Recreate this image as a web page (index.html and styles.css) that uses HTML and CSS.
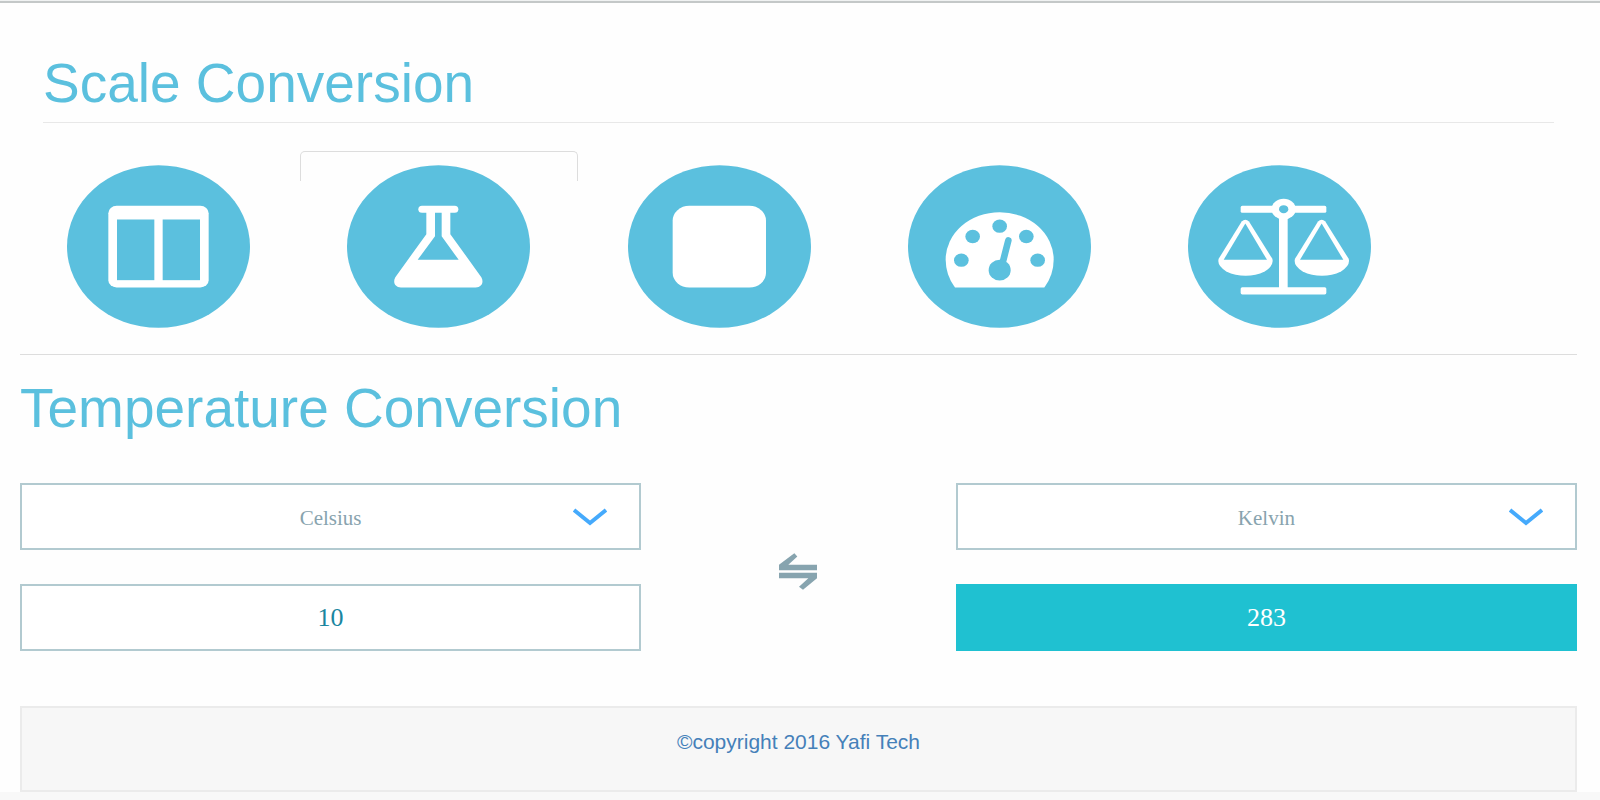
FILE: index.html
```html
<!DOCTYPE html>
<html lang="en">
<head>
<meta charset="utf-8">
<meta name="viewport" content="width=device-width, initial-scale=1">
<title>Scale Conversion</title>
<link rel="stylesheet" href="styles.css">
</head>
<body>
<div class="page">
  <header class="page-header">
    <h1 class="heading">Scale Conversion</h1>
  </header>

  <nav class="tabs" aria-label="Scales">
    <a class="tab" href="#length" aria-label="Length">
      <svg class="tab-icon" viewBox="0 0 549 488" aria-hidden="true">
        <ellipse class="disc" cx="274.5" cy="244" rx="274.5" ry="244"/>
        <rect class="glyph" x="124" y="122" width="301" height="245" rx="25" ry="22"/>
        <rect class="disc" x="150" y="163" width="112" height="182"/>
        <rect class="disc" x="287" y="163" width="112" height="182"/>
      </svg>
    </a>
    <a class="tab tab-active" href="#temperature" aria-label="Temperature" aria-current="page">
      <svg class="tab-icon" viewBox="0 0 549 488" aria-hidden="true">
        <ellipse class="disc" cx="274.5" cy="244" rx="274.5" ry="244"/>
        <rect class="glyph" x="214" y="122" width="120" height="21" rx="11"/>
        <path class="glyph" d="M238 132V207L145 336C137 350 143 367 162 367H386C405 367 411 350 403 336L310 207V132Z"/>
        <path class="disc" d="M264 143H284V213L335 284H212L264 213Z"/>
      </svg>
    </a>
    <a class="tab" href="#area" aria-label="Area">
      <svg class="tab-icon" viewBox="0 0 549 488" aria-hidden="true">
        <ellipse class="disc" cx="274.5" cy="244" rx="274.5" ry="244"/>
        <rect class="glyph" x="134" y="122" width="280" height="245" rx="50" ry="44"/>
      </svg>
    </a>
    <a class="tab" href="#speed" aria-label="Speed">
      <svg class="tab-icon" viewBox="0 0 549 488" aria-hidden="true">
        <ellipse class="disc" cx="274.5" cy="244" rx="274.5" ry="244"/>
        <path class="glyph" d="M141 367Q113 330 113 283A162 142 0 0 1 437 283Q437 330 409 367Z"/>
        <ellipse class="disc" cx="160" cy="285" rx="22" ry="20"/>
        <ellipse class="disc" cx="194" cy="214" rx="22" ry="20"/>
        <ellipse class="disc" cx="275" cy="183" rx="22" ry="20"/>
        <ellipse class="disc" cx="355" cy="214" rx="22" ry="20"/>
        <ellipse class="disc" cx="389" cy="285" rx="22" ry="20"/>
        <ellipse class="disc" cx="275" cy="315" rx="33" ry="31"/>
        <path class="needle" d="M280 308L301 226"/>
      </svg>
    </a>
    <a class="tab" href="#weight" aria-label="Weight">
      <svg class="tab-icon" viewBox="0 0 549 488" aria-hidden="true">
        <ellipse class="disc" cx="274.5" cy="244" rx="274.5" ry="244"/>
        <rect class="glyph" x="158" y="122" width="257" height="21" rx="5"/>
        <rect class="glyph" x="273" y="140" width="26" height="236"/>
        <rect class="glyph" x="158" y="366" width="257" height="22" rx="5"/>
        <ellipse class="glyph" cx="287" cy="132" rx="36" ry="31"/>
        <ellipse class="disc" cx="287" cy="132" rx="14" ry="12"/>
        <path class="glyph" d="M161 169Q172 158 183 169L253 281Q259 301 230 319Q203 332 173 332Q142 332 115 319Q86 301 92 281Z"/>
        <path class="disc" d="M172 175L107 284H237Z"/>
        <path class="glyph" d="M390 169Q401 158 412 169L482 281Q488 301 459 319Q432 332 402 332Q371 332 344 319Q315 301 321 281Z"/>
        <path class="disc" d="M401 175L336 284H466Z"/>
      </svg>
    </a>
  </nav>

  <main>
    <h2 class="heading heading-section">Temperature Conversion</h2>
    <form class="converter">
      <div class="side">
        <div class="select-wrap">
          <select class="field unit" aria-label="From unit">
            <option selected>Celsius</option>
            <option>Fahrenheit</option>
            <option>Kelvin</option>
          </select>
          <svg class="chevron" viewBox="0 0 34 18" aria-hidden="true"><path d="M1 2L17 15L33 2"/></svg>
        </div>
        <input class="field value" type="text" value="10" aria-label="Value">
      </div>
      <button class="swap" type="button" aria-label="Swap units">
        <svg class="swap-icon" viewBox="0 0 114 110" aria-hidden="true">
          <path d="M0 35L46 0L55 10L28 35H114V51H0Z"/>
          <path d="M0 59H114V75L72 110L60 101L88 75H0Z"/>
        </svg>
      </button>
      <div class="side">
        <div class="select-wrap">
          <select class="field unit" aria-label="To unit">
            <option>Celsius</option>
            <option>Fahrenheit</option>
            <option selected>Kelvin</option>
          </select>
          <svg class="chevron" viewBox="0 0 34 18" aria-hidden="true"><path d="M1 2L17 15L33 2"/></svg>
        </div>
        <input class="field value result" type="text" value="283" readonly aria-label="Result">
      </div>
    </form>
  </main>

  <footer class="footer"><a class="footer-link" href="#top">©copyright 2016 Yafi Tech</a></footer>
</div>
</body>
</html>
```
FILE: styles.css
```css
* {
  box-sizing: border-box;
}

body {
  margin: 0;
  background: #f8f8f8;
  font-family: "Liberation Sans", Arial, sans-serif;
  border-top: 1px solid #f0f2f2;
}

.page {
  padding: 50px 23px 0 20px;
  background: #fefefe;
  border-top: 2px solid #c4c8c8;
}

.page-header {
  margin: 0 23px 28px;
  padding-bottom: 9px;
  border-bottom: 1px solid #e8e8e8;
}

.heading {
  margin: 0;
  color: #5bc0de;
  font-size: 55px;
  font-weight: 400;
  line-height: 60px;
}

.heading-section {
  margin: 23px 0 45px;
}

.tabs {
  display: flex;
  padding-bottom: 26px;
  border-bottom: 1px solid #ddd;
}

.tab {
  position: relative;
  display: flex;
  justify-content: center;
  width: 18%;
  padding: 14px 3px 0 0;
}

.tab-active::before {
  content: "";
  position: absolute;
  inset: 0 3px auto 0;
  height: 29px;
  border: 1px solid #ddd;
  border-bottom: 0;
  border-radius: 5px 5px 0 0;
}

.tab-icon {
  position: relative;
  display: block;
  width: 183px;
  height: 163px;
}

.disc {
  fill: #5bc0de;
}

.glyph {
  fill: #fff;
}

.needle {
  stroke: #5bc0de;
  stroke-width: 20;
  stroke-linecap: round;
}

.converter {
  display: grid;
  grid-template-columns: 2fr 1fr 2fr;
  column-gap: 2px;
  align-items: center;
}

.side {
  display: grid;
  gap: 34px;
}

.select-wrap {
  position: relative;
}

.field {
  display: block;
  width: 100%;
  height: 67px;
  margin: 0;
  padding: 0 40px;
  border: 2px solid #b2cad0;
  border-radius: 0;
  background: #fff;
  font-family: "Liberation Serif", "Times New Roman", serif;
  text-align: center;
  outline: none;
}

.unit {
  appearance: none;
  padding-top: 2px;
  color: #88a3ae;
  font-size: 21px;
  text-align-last: center;
}

.value {
  color: #1a86a0;
  font-size: 26px;
}

.result {
  border-color: #1fc1d1;
  background: #1fc1d1;
  color: #fff;
}

.chevron {
  position: absolute;
  top: 25px;
  right: 34px;
  width: 34px;
  height: 18px;
  fill: none;
  stroke: #45aafc;
  stroke-width: 4;
  pointer-events: none;
}

.swap {
  justify-self: center;
  padding: 8px 0 0;
  border: 0;
  background: none;
  cursor: pointer;
}

.swap-icon {
  display: block;
  width: 38px;
  height: 37px;
  fill: #87a4af;
}

.footer {
  margin-top: 55px;
  padding: 20px 20px 32px;
  border: 2px solid #ebebeb;
  background: #f7f7f7;
  text-align: center;
  line-height: 28px;
}

.footer-link {
  color: #4580b9;
  font-size: 21px;
  text-decoration: none;
}
```
